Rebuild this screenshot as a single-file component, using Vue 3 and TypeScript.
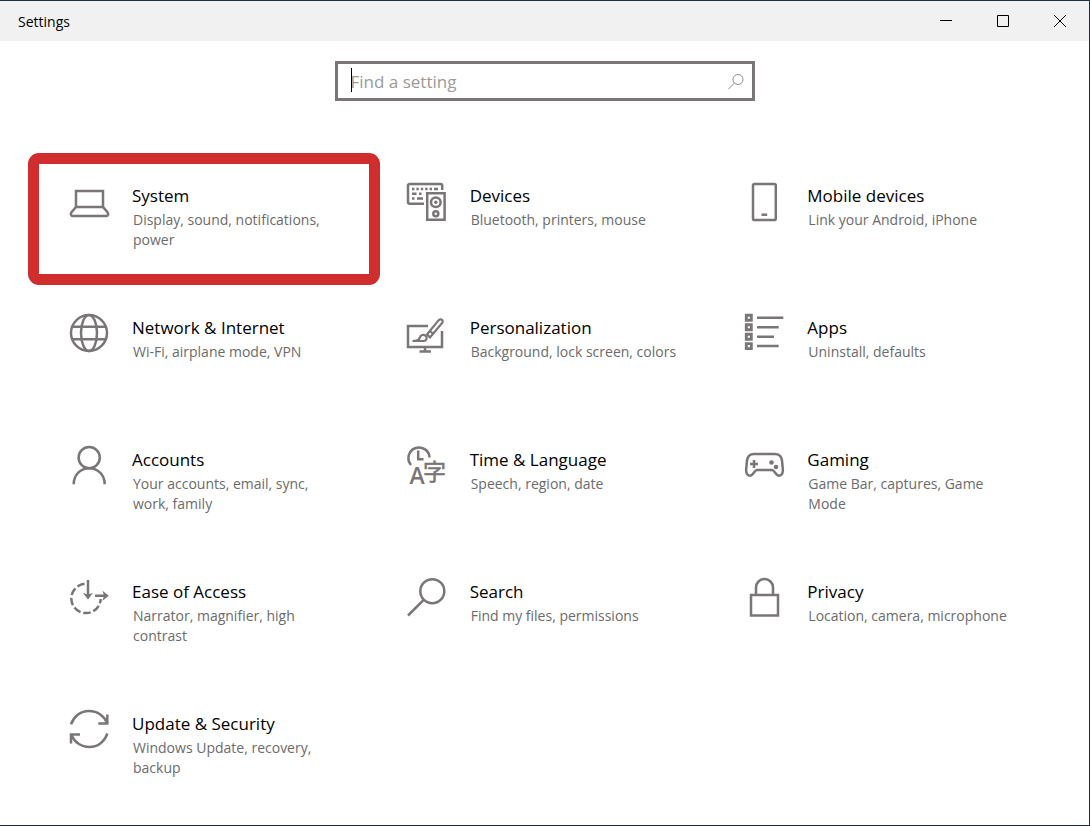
<script setup lang="ts">
import { ref } from 'vue'

interface Category {
  id: string
  title: string
  description: string
}

const query = ref('')
const selected = 'system'

const categories: Category[] = [
  { id: 'system', title: 'System', description: 'Display, sound, notifications, power' },
  { id: 'devices', title: 'Devices', description: 'Bluetooth, printers, mouse' },
  { id: 'mobile', title: 'Mobile devices', description: 'Link your Android, iPhone' },
  { id: 'network', title: 'Network & Internet', description: 'Wi-Fi, airplane mode, VPN' },
  { id: 'personalization', title: 'Personalization', description: 'Background, lock screen, colors' },
  { id: 'apps', title: 'Apps', description: 'Uninstall, defaults' },
  { id: 'accounts', title: 'Accounts', description: 'Your accounts, email, sync, work, family' },
  { id: 'time', title: 'Time & Language', description: 'Speech, region, date' },
  { id: 'gaming', title: 'Gaming', description: 'Game Bar, captures, Game Mode' },
  { id: 'ease', title: 'Ease of Access', description: 'Narrator, magnifier, high contrast' },
  { id: 'search', title: 'Search', description: 'Find my files, permissions' },
  { id: 'privacy', title: 'Privacy', description: 'Location, camera, microphone' },
  { id: 'update', title: 'Update & Security', description: 'Windows Update, recovery, backup' },
]
</script>

<template>
  <div class="window">
    <header class="titlebar">
      <h1 class="app-name">Settings</h1>
      <div class="controls">
        <button type="button" class="control" aria-label="Minimize">
          <svg width="12" height="12" viewBox="0 0 12 12"><path d="M0 5.5h12" /></svg>
        </button>
        <button type="button" class="control" aria-label="Maximize">
          <svg width="12" height="12" viewBox="0 0 12 12"><path d="M.5.5h11v11H.5z" /></svg>
        </button>
        <button type="button" class="control" aria-label="Close">
          <svg width="12" height="12" viewBox="0 0 12 12"><path d="M0 0l12 12M12 0L0 12" /></svg>
        </button>
      </div>
    </header>

    <main class="content">
      <form class="search" role="search" @submit.prevent>
        <input v-model="query" class="search-input" type="text" placeholder="Find a setting" aria-label="Find a setting" />
        <span v-if="!query" class="caret"></span>
        <button type="submit" class="search-button" aria-label="Search">
          <svg width="16" height="16" viewBox="0 0 16 16"><circle cx="10" cy="5.500" r="5" /><path d="M6.400 9.100L.4 15.200" /></svg>
        </button>
      </form>

      <nav class="grid" aria-label="Settings categories">
        <a
          v-for="item in categories"
          :key="item.id"
          :href="'#' + item.id"
          class="tile"
          :class="{ highlighted: item.id === selected }"
        >
          <svg class="icon" viewBox="0 0 40 40" aria-hidden="true">
            <g v-if="item.id === 'system'">
              <path d="M7 25V9h27v16z" />
              <path d="M7 25l-4.700 5.500c-1 1.800-.2 3.500 1.200 3.500h34c1.400 0 2.200-1.700 1.200-3.500L34 25" />
            </g>
            <g v-else-if="item.id === 'devices'">
              <path d="M17 21.700H2.600a1.600 1.600 0 0 1-1.600-1.600V3.600A1.600 1.600 0 0 1 2.600 2h31A1.600 1.600 0 0 1 35.200 3.600V8" />
              <path d="M5 7h2.400m2 0h2.400m2 0h2.400m2 0h2.400m2 0h2.400m2 0H31M5 11.700h4.500m2.500 0h2.500M5 16.500h2.500m2.500 0h6" />
              <path d="M20.200 11.200h17.400v26.600H20.200z" />
              <circle cx="28.800" cy="20.300" r="4.800" />
              <circle class="solid" cx="28.800" cy="20.300" r="1.700" />
              <circle cx="28.800" cy="31.700" r="2.500" />
            </g>
            <g v-else-if="item.id === 'mobile'">
              <rect x="9" y="2" width="22.800" height="36" rx="1.600" />
              <path d="M17.500 32.700h5.700" />
            </g>
            <g v-else-if="item.id === 'network'">
              <circle cx="20" cy="19" r="18" />
              <ellipse cx="20" cy="19" rx="8" ry="18" />
              <path d="M3 12.700h34M3 25.300h34" />
            </g>
            <g v-else-if="item.id === 'personalization'">
              <path d="M21 12H1v21h34V17M18 33v4M12.500 37.400h11.500" />
              <path class="fine" d="M20 20.500L31.500 6.400c1-1.200 2.600-1.300 3.500-.5s.9 2.300-.1 3.400L23 23.400zM20 20.500l3 2.900" />
              <path class="fine" d="M23.500 17.500l3 2.500" />
              <path class="fine" d="M5.500 27c3.500 0 6.800-.6 7.300-3.500.5-2.500 3.700-3.700 5.800-1.700 2.100 2 1 5.200-2 5.200z" />
            </g>
            <g v-else-if="item.id === 'apps'">
              <path class="bold" d="M2.300 1.300h5v5h-5zM2.300 10.800h5v5h-5zM2.300 20.200h5v5h-5zM2.300 29.600h5v5h-5z" />
              <path d="M13 3.700h26.300M13 13.200h21.700M13 22.700h17M13 32h21.700" />
            </g>
            <g v-else-if="item.id === 'accounts'">
              <circle cx="20.200" cy="11.700" r="10.600" />
              <path d="M4.700 38.300c0-9.500 7-16 15.500-16s15.500 6.500 15.500 16" />
            </g>
            <g v-else-if="item.id === 'time'">
              <path d="M4 19A10.600 10.600 0 1 1 22.600 11.500" />
              <path d="M11.200 4.500v8.700h5.300" />
              <text x="2.500" y="38" class="latin">A</text>
              <text x="16" y="34" class="kanji">字</text>
            </g>
            <g v-else-if="item.id === 'gaming'">
              <path d="M10 8h20.800c4.700 0 6.700 2.800 7.200 6.500l.8 8.500c.4 4-1 6.700-3.800 6.700-3.300 0-4.500-5.700-7-5.700H13c-2.500 0-3.700 5.700-7 5.700-2.800 0-4.200-2.700-3.800-6.700L3 14.500C3.500 10.800 5.500 8 10 8z" />
              <path d="M6 18h8M10 14v8" />
              <circle class="solid" cx="27.500" cy="16.500" r="2.300" />
              <circle class="solid" cx="32" cy="21" r="2.300" />
            </g>
            <g v-else-if="item.id === 'ease'">
              <path stroke-dasharray="7.600 2.800" d="M15.500 5.800A14.700 14.700 0 1 0 31.700 21" />
              <path d="M19 2v17M26 17.800h11" />
              <path class="solid" d="M14 15l5 1.500 5-1.500-5 6.500zM33.500 12.800l6.300 5-6.300 5 1.500-5z" />
            </g>
            <g v-else-if="item.id === 'search'">
              <circle cx="25.300" cy="13.200" r="12" />
              <path d="M16.700 21.800L1 37.500" />
            </g>
            <g v-else-if="item.id === 'privacy'">
              <path d="M7 17h27v20.500H7zM12 17v-7.500a8.500 8.500 0 0 1 17 0V17" />
            </g>
            <g v-else>
              <path d="M2 14.300C5 6 12 1 20 1c8.500 0 15.500 5 18.300 12.300M38.300 23.500C35.500 32 28.500 37 20.500 37 12 37 5 32 2.200 24.500" />
              <path d="M38.300 4.500v9h-9M2 33.500v-9h9" />
            </g>
          </svg>
          <span class="text">
            <span class="title">{{ item.title }}</span>
            <span class="description">{{ item.description }}</span>
          </span>
        </a>
      </nav>
    </main>
  </div>
</template>

<style>
body {
  margin: 0;
}
</style>

<style scoped>
.window {
  box-sizing: border-box;
  min-height: 100vh;
  border: solid #1f2f4a;
  border-width: 1px 1px 1px 0;
  background: #fff;
  color: #000;
  font-family: "Open Sans", "Noto Sans", "Noto Sans CJK JP", sans-serif;
}

.titlebar {
  display: flex;
  justify-content: space-between;
  box-sizing: border-box;
  height: 40px;
  padding: 0 1px 0 18px;
  background: #f1f1f1;
}

.app-name {
  margin: 0;
  font-size: 14px;
  font-weight: 400;
  line-height: 42px;
}

.controls {
  display: flex;
}

.control {
  display: flex;
  align-items: center;
  justify-content: center;
  width: 57px;
  padding: 0;
  border: 0;
  background: none;
}

.control svg {
  fill: none;
  stroke: #000;
}

.search {
  position: relative;
  display: flex;
  align-items: center;
  box-sizing: border-box;
  width: 420px;
  max-width: 90%;
  height: 40px;
  margin: 20px auto 63px;
  border: 3px solid #7a7576;
}

.search-input {
  flex: 1;
  min-width: 0;
  height: 100%;
  box-sizing: border-box;
  padding: 0 0 0 13px;
  border: 0;
  outline: 0;
  background: none;
  font: inherit;
  font-size: 17px;
}

.search-input::placeholder {
  color: #9a9a9a;
  opacity: 1;
}

.caret {
  position: absolute;
  top: 4px;
  left: 13px;
  width: 1px;
  height: 24px;
  background: #000;
}

.search-button {
  display: flex;
  padding: 2px 8px 0;
  border: 0;
  background: none;
}

.search-button svg {
  fill: none;
  stroke: #8c8c8c;
}

.grid {
  display: grid;
  grid-template-columns: repeat(3, 1fr);
  grid-auto-rows: minmax(110px, auto);
  gap: 22px 8px;
  padding: 0 45px 22px 39px;
}

.tile {
  position: relative;
  display: flex;
  gap: 23px;
  box-sizing: border-box;
  padding: 18px 26px 0 30px;
  color: inherit;
  text-decoration: none;
}

.highlighted::after {
  content: "";
  position: absolute;
  inset: -11px;
  border: 11px solid #cf2d2e;
  border-radius: 11px;
  pointer-events: none;
}

.icon {
  flex: none;
  width: 40px;
  height: 40px;
  overflow: visible;
  fill: none;
  stroke: #7a7576;
  stroke-width: 2.5;
}

.icon .fine {
  stroke-width: 2.2;
}

.icon .bold {
  stroke-width: 2.9;
}

.icon .solid {
  fill: #7a7576;
  stroke: none;
}

.icon text {
  fill: #7a7576;
  stroke: none;
}

.icon .latin {
  font-size: 23px;
  font-weight: 600;
}

.icon .kanji {
  font-family: "Noto Sans CJK JP", sans-serif;
  font-size: 23px;
  font-weight: 400;
  stroke: #7a7576;
  stroke-width: 0.5;
}

.text {
  display: flex;
  flex-direction: column;
  gap: 2px;
  min-width: 0;
  padding-top: 2px;
}

.title {
  font-size: 17px;
  line-height: 24px;
}

.description {
  padding-left: 1px;
  color: #6b6b6b;
  font-size: 14px;
  line-height: 20px;
}
</style>
